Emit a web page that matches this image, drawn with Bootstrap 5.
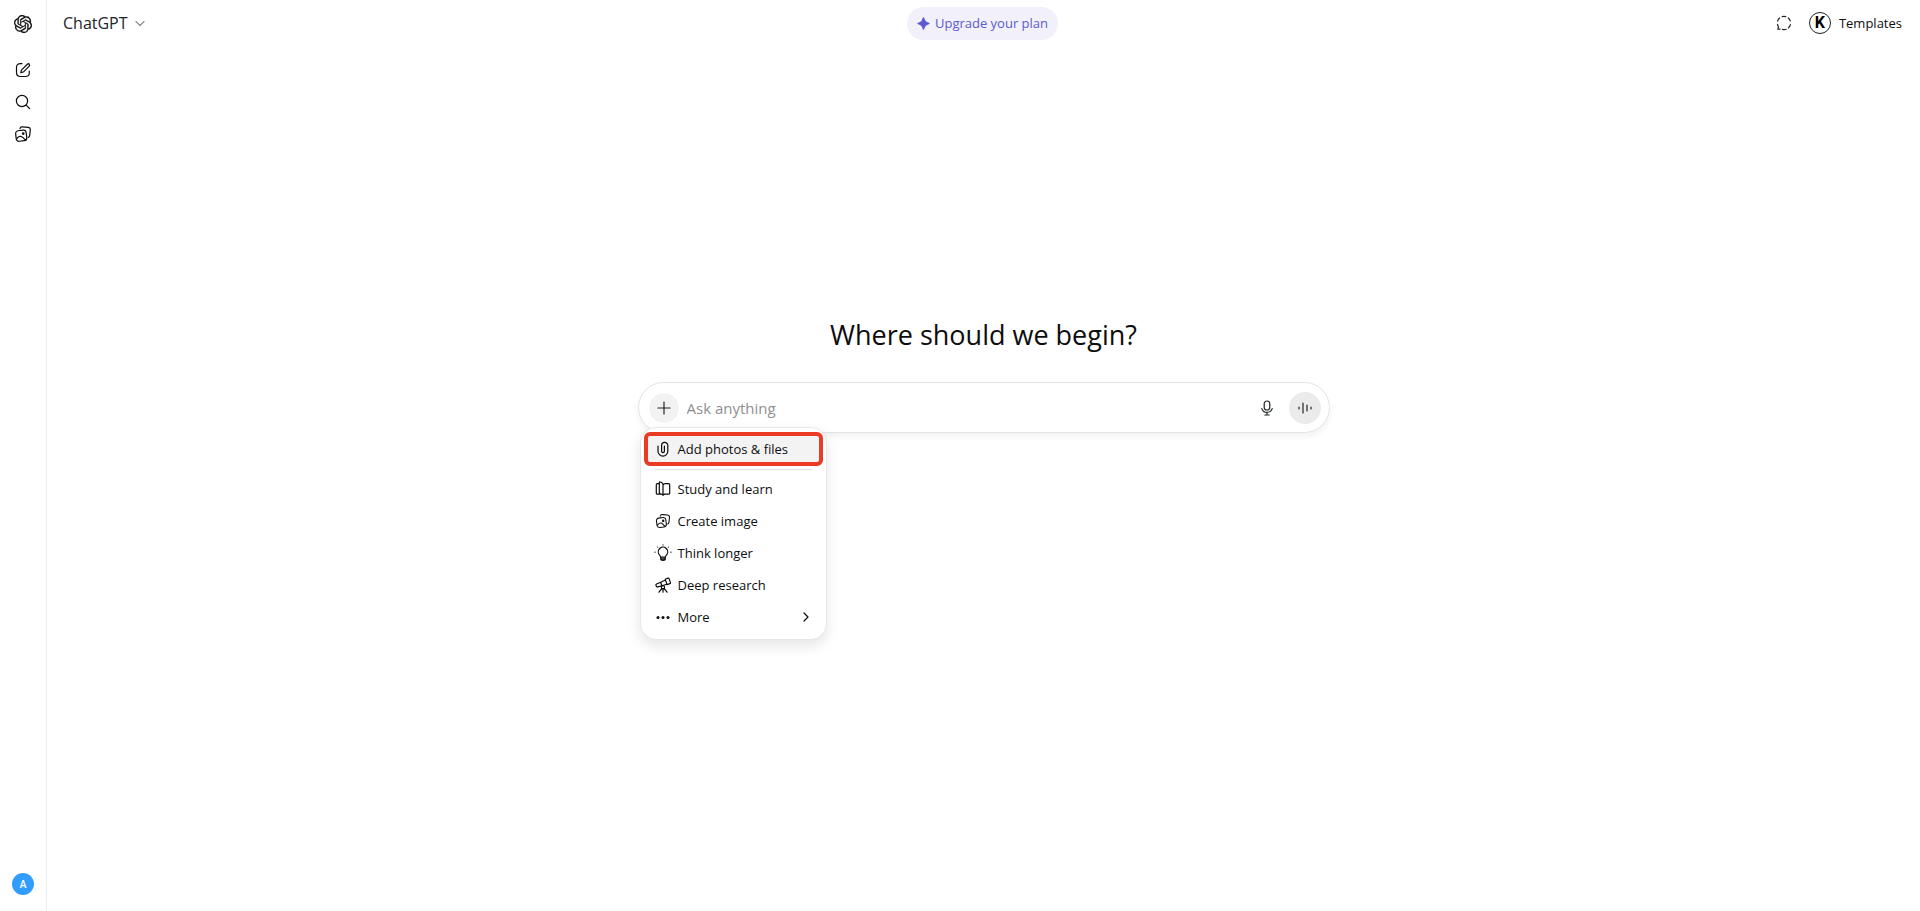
<!DOCTYPE html>
<html lang="en">
<head>
<meta charset="utf-8">
<meta name="viewport" content="width=device-width, initial-scale=1">
<title>ChatGPT</title>
<link rel="stylesheet" href="https://cdn.jsdelivr.net/npm/bootstrap@5.3.0/dist/css/bootstrap.min.css">
<style>
  body { font-family: "Open Sans", "Noto Sans", sans-serif; font-size: 13px; line-height: 20px; color: #0d0d0d; background: #fff; }
  svg { display: block; flex: none; }
  .ico { fill: none; stroke: currentColor; stroke-width: 1.2; stroke-linecap: round; stroke-linejoin: round; }
  .rail { width: 47px; border-right: 1px solid #ededed; }
  .rail-link { height: 32px; width: 32px; color: #0d0d0d; }
  .rail-home { margin-bottom: 14px; }
  .avatar { width: 22px; height: 22px; background: #339cff; font-size: 10px; font-weight: 600; }
  .topbar { height: 46px; padding: 0 18px 0 16px; }
  .side { flex: 1 1 0; }
  .model-btn { font-size: 16px; line-height: 24px; gap: 5px; }
  .chevron { color: #8f8f8f; }
  .upgrade { height: 33px; padding: 0 10px; gap: 5px; font-size: 13px; line-height: 20px; color: #5d5bd0; background: #f1f0fb; }
  .k-logo { width: 22px; height: 22px; border: 1px solid #222; color: #000; font: 700 16px/20px "Roboto", sans-serif; }
  .hero { padding-top: 30vh; }
  .hero-title { font-size: 27px; line-height: 32px; font-weight: 400; margin-bottom: 31px; }
  .wrap { width: 100%; max-width: 692px; }
  .composer { height: 51px; padding: 0 8px 0 10px; border: 1px solid #e3e3e3; box-shadow: 0 4px 6px rgba(0,0,0,.05); }
  .composer-input { padding: 0 8px; font-size: 15px; line-height: 24px; color: #0d0d0d; }
  .composer-input::placeholder { color: #8f8f8f; opacity: 1; }
  .plus { width: 30px; height: 30px; background: #f2f2f2; }
  .dictate { margin-right: 14px; }
  .voice { width: 32px; height: 32px; background: #ebebeb; }
  .tools { top: 45px; left: 2px; width: 187px; min-width: 0; padding: 4px 4px 6px; font-size: 13px; border: 1px solid #e8e8e8; border-radius: 16px; box-shadow: 0 6px 14px rgba(0,0,0,.1); }
  .tool-item { height: 32px; padding: 0 10px; gap: 7px; color: #0d0d0d; }
  .tool-item.marked { height: 34px; width: calc(100% + 2px); margin: 0 -1px; padding: 0 7px; border: 4px solid #eb3b24; border-radius: 6px; background: #f3f3f3; }
  .tools .dropdown-divider { margin: 3px 10px; border-color: #e3e3e3; }
</style>
</head>
<body>
<svg class="d-none">
  <symbol id="pictures" viewBox="0 0 18 18">
    <rect x="1.9" y="5.4" width="10.6" height="10.6" rx="2.8" transform="rotate(-7 7.2 10.7)"/>
    <path d="M6 3.7C6.2 2.300 7 1.700 8.300 1.800l5.700.5c1.700.2 2.500 1.200 2.300 2.700l-.6 5.400c-.1 1-.6 1.700-1.400 2M2.800 13.600c2-2.700 4.400-3 6.200-.9.900 1.100 1.700 1.900 2.800 2.200"/>
    <circle cx="9.200" cy="8.600" r=".8"/>
  </symbol>
</svg>
<div class="d-flex min-vh-100">
  <nav class="rail d-flex flex-column align-items-center flex-shrink-0" aria-label="Main">
    <a href="#" class="rail-link rail-home d-flex align-items-center justify-content-center mt-2" aria-label="Home">
      <svg width="18" height="18" viewBox="0 0 24 24" fill="currentColor" stroke="currentColor" stroke-width=".3"><path d="M22.2819 9.8211a5.9847 5.9847 0 0 0-.5157-4.9108 6.0462 6.0462 0 0 0-6.5098-2.9A6.0651 6.0651 0 0 0 4.9807 4.1818a5.9847 5.9847 0 0 0-3.9977 2.9 6.0462 6.0462 0 0 0 .7427 7.0966 5.98 5.98 0 0 0 .511 4.9107 6.051 6.051 0 0 0 6.5146 2.9001A5.9847 5.9847 0 0 0 13.2599 24a6.0557 6.0557 0 0 0 5.7718-4.2058 5.9894 5.9894 0 0 0 3.9977-2.9001 6.0557 6.0557 0 0 0-.7475-7.0729zm-9.022 12.6081a4.4755 4.4755 0 0 1-2.8764-1.0408l.1419-.0804 4.7783-2.7582a.7948.7948 0 0 0 .3927-.6813v-6.7369l2.02 1.1686a.071.071 0 0 1 .038.052v5.5826a4.504 4.504 0 0 1-4.4945 4.4944zm-9.6607-4.1254a4.4708 4.4708 0 0 1-.5346-3.0137l.142.0852 4.783 2.7582a.7712.7712 0 0 0 .7806 0l5.8428-3.3685v2.3324a.0804.0804 0 0 1-.0332.0615L9.74 19.9502a4.4992 4.4992 0 0 1-6.1408-1.6464zM2.3408 7.8956a4.485 4.485 0 0 1 2.3655-1.9728V11.6a.7664.7664 0 0 0 .3879.6765l5.8144 3.3543-2.0201 1.1685a.0757.0757 0 0 1-.071 0l-4.8303-2.7865A4.504 4.504 0 0 1 2.3408 7.872zm16.5963 3.8558L13.1038 8.364 15.1192 7.2a.0757.0757 0 0 1 .071 0l4.8303 2.7913a4.4944 4.4944 0 0 1-.6765 8.1042v-5.6772a.79.79 0 0 0-.407-.667zm2.0107-3.0231l-.142-.0852-4.7735-2.7818a.7759.7759 0 0 0-.7854 0L9.409 9.2297V6.8974a.0662.0662 0 0 1 .0284-.0615l4.8303-2.7866a4.4992 4.4992 0 0 1 6.6802 4.66zM8.3065 12.863l-2.02-1.1638a.0804.0804 0 0 1-.038-.0567V6.0742a4.4992 4.4992 0 0 1 7.3757-3.4537l-.142.0805L8.704 5.459a.7948.7948 0 0 0-.3927.6813zm1.0976-2.3654l2.602-1.4998 2.6069 1.4998v2.9994l-2.5974 1.4997-2.6067-1.4997Z"/></svg>
    </a>
    <a href="#" class="rail-link d-flex align-items-center justify-content-center" aria-label="New chat">
      <svg class="ico" width="18" height="18" viewBox="0 0 18 18"><path d="M8 2.700H6.500C3.500 2.700 2.500 3.700 2.500 6.700v4.800c0 3 1 4 4 4h4.800c3 0 4-1 4-4V10M14.900 2.800c.9.900.8 1.900.1 2.600l-5.200 5.200c-.7.7-2 1-3 1.100.1-1 .4-2.300 1.100-3l5.200-5.200c.6-.6 1.300-1.100 1.800-.7z"/></svg>
    </a>
    <a href="#" class="rail-link d-flex align-items-center justify-content-center" aria-label="Search chats">
      <svg class="ico" width="18" height="18" viewBox="0 0 18 18"><circle cx="8" cy="8" r="5.600"/><path d="M12.200 12.200 15.500 15.500"/></svg>
    </a>
    <a href="#" class="rail-link d-flex align-items-center justify-content-center" aria-label="Library">
      <svg class="ico" width="18" height="18"><use href="#pictures"/></svg>
    </a>
    <button type="button" class="avatar btn p-0 border-0 rounded-circle text-white mt-auto mb-3 d-flex align-items-center justify-content-center">A</button>
  </nav>

  <div class="flex-grow-1 d-flex flex-column">
    <header class="topbar d-flex align-items-center">
      <div class="side d-flex">
        <button type="button" class="model-btn btn p-0 border-0 d-flex align-items-center">ChatGPT
          <svg class="ico chevron" width="14" height="14" viewBox="0 0 14 14"><path d="M3 5.500 7 9.500l4-4"/></svg>
        </button>
      </div>
      <button type="button" class="upgrade btn border-0 rounded-pill d-flex align-items-center">
        <svg width="13" height="13" viewBox="0 0 12 12" fill="currentColor"><path d="M6 .3c.5 0 .6.3.8.8.8 2.500 1.600 3.300 4.100 4.100.5.2.8.3.8.8s-.3.600-.8.800C8.400 7.600 7.600 8.400 6.800 10.900c-.2.5-.3.800-.8.800s-.6-.3-.8-.8C4.400 8.400 3.600 7.600 1.100 6.800.6 6.600.3 6.500.3 6s.3-.6.800-.8C3.600 4.400 4.400 3.600 5.200 1.100 5.400.6 5.500.3 6 .3z"/></svg>
        <span>Upgrade your plan</span>
      </button>
      <div class="side d-flex align-items-center justify-content-end">
        <button type="button" class="btn p-0 border-0 me-3" aria-label="Temporary chat">
          <svg class="ico" width="18" height="18" viewBox="0 0 18 18"><path d="M7.200 2.600a6.600 6.600 0 0 1 3.600 0M13.300 4a6.600 6.600 0 0 1 2 3M15.400 10.600a6.600 6.600 0 0 1-1.900 3.200M11.200 15.200a6.600 6.600 0 0 1-3.800.1M2.600 7.200a6.600 6.600 0 0 1 2-3.200M2.500 10.400c.1.900.5 1.700 1 2.400L2.800 15.200l2.300-.1"/></svg>
        </button>
        <span class="k-logo rounded-circle text-center me-2">K</span>
        <a href="#" class="text-reset text-decoration-none">Templates</a>
      </div>
    </header>

    <main class="hero flex-grow-1 d-flex flex-column align-items-center">
      <h1 class="hero-title">Where should we begin?</h1>
      <div class="wrap position-relative">
        <form class="composer d-flex align-items-center rounded-pill">
          <button type="button" class="plus btn p-0 border-0 rounded-circle d-flex align-items-center justify-content-center flex-shrink-0" aria-label="Add" aria-expanded="true">
            <svg class="ico" width="16" height="16" viewBox="0 0 16 16"><path d="M8 2v12M2 8h12"/></svg>
          </button>
          <input type="text" class="composer-input form-control border-0 shadow-none bg-transparent" placeholder="Ask anything" aria-label="Ask anything">
          <button type="button" class="dictate btn p-0 border-0" aria-label="Dictate">
            <svg class="ico" width="16" height="16" viewBox="0 0 16 16"><rect x="5.200" y="1" width="5.600" height="9" rx="2.800"/><path d="M2.800 8.600c.7 2.300 2.700 3.800 5.200 3.800s4.500-1.500 5.200-3.800M8 12.500V15M5.800 15h4.400"/></svg>
          </button>
          <button type="button" class="voice btn p-0 border-0 rounded-circle d-flex align-items-center justify-content-center flex-shrink-0" aria-label="Voice mode">
            <svg class="ico" width="16" height="16" viewBox="0 0 16 16"><path d="M2 7v2M6 3v10M10 5v6M14 7v2"/></svg>
          </button>
        </form>
        <div class="tools dropdown-menu show">
          <button type="button" class="tool-item marked dropdown-item d-flex align-items-center">
            <svg class="ico" width="16" height="16" viewBox="0 0 16 16"><path d="M3 5v5.200a4.900 4.900 0 0 0 9.800 0V4.400a3.100 3.100 0 0 0-6.200 0v5.800a1.400 1.400 0 0 0 2.800 0V5"/></svg>
            Add photos &amp; files</button>
          <hr class="dropdown-divider">
          <button type="button" class="tool-item dropdown-item d-flex align-items-center">
            <svg class="ico" width="16" height="16" viewBox="0 0 16 16"><path d="M8 3.500v10.800M8 3.500c0-1-.6-1.600-1.500-2L5.200 1c-.6-.2-.9.1-.9.700v9.500c0 .7.300 1 .8 1.300l2 1c.5.300.9.500.9.800M4.300 2.700h-2c-.6 0-1 .4-1 1v8.500c0 .6.400 1 1 1h3M8 4.200c.5-1 1.400-1.500 2.500-1.500h3.200c.6 0 1 .4 1 1v8.500c0 .6-.4 1-1 1h-3.200c-1.200 0-2 .3-2.500 1.100"/></svg>
            Study and learn</button>
          <button type="button" class="tool-item dropdown-item d-flex align-items-center">
            <svg class="ico" width="16" height="16"><use href="#pictures"/></svg>
            Create image</button>
          <button type="button" class="tool-item dropdown-item d-flex align-items-center">
            <svg class="ico overflow-visible" width="16" height="16" viewBox="0 0 16 16"><path d="M5.700 12.200c0-1.100-.6-1.500-1.300-2.300a4.700 4.700 0 1 1 7.200 0c-.7.800-1.300 1.200-1.300 2.300zM5.700 12.500v1.200c0 1 .7 1.600 2.300 1.600s2.300-.6 2.300-1.600v-1.200M6.500 13.800h3M8 0v-.1M2.700 2v.1M13.300 2v.1M0 7.200h.1M16 7.200h-.1"/></svg>
            Think longer</button>
          <button type="button" class="tool-item dropdown-item d-flex align-items-center">
            <svg class="ico" width="16" height="16" viewBox="0 0 16 16"><path d="M10.200 2.200 13 1.100c.5-.2.900 0 1.100.5l1.300 4c.2.500 0 .9-.5 1l-2.900 1zM10.500 3 5.700 5.200l1.200 3.600 4.900-1.500M5.700 5.200 1.600 7c-.6.300-.8.700-.6 1.300l.3 1c.2.600.600.8 1.200.6l4.400-1.100M8 12v3.200M6.900 11.500l-3 3.700M9.100 11.500l3 3.700"/><circle cx="8" cy="10.300" r="1.600"/></svg>
            Deep research</button>
          <button type="button" class="tool-item dropdown-item d-flex align-items-center">
            <svg width="16" height="16" viewBox="0 0 16 16" fill="currentColor"><circle cx="3" cy="8.500" r="1.500"/><circle cx="8" cy="8.500" r="1.500"/><circle cx="13" cy="8.500" r="1.500"/></svg>
            More
            <svg class="ico ms-auto" width="12" height="12" viewBox="0 0 12 12"><path d="m4 2 4 4-4 4"/></svg></button>
        </div>
      </div>
    </main>
  </div>
</div>
<script src="https://cdn.jsdelivr.net/npm/bootstrap@5.3.0/dist/js/bootstrap.bundle.min.js"></script>
</body>
</html>
